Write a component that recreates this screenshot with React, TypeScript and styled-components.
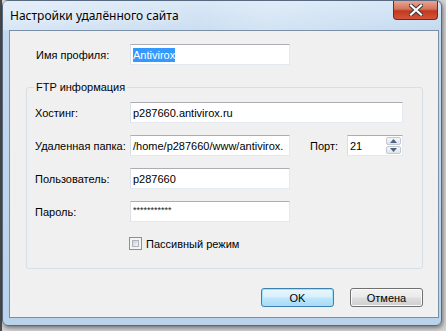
import styled, { createGlobalStyle } from "styled-components";

const GlobalStyle = createGlobalStyle`
  html, body {
    margin: 0;
    padding: 0;
  }
  body {
    width: 446px;
    height: 331px;
    overflow: hidden;
    background: #d2d2d2;
  }
`;

const Desktop = styled.div`
  width: 446px;
  height: 331px;
  box-sizing: border-box;
  padding-left: 2px;
  background: linear-gradient(to right, #4a4a4a 0 2px, #d2d2d2 2px);
`;

const Window = styled.div`
  width: 440px;
  height: 326px;
  box-sizing: border-box;
  display: flex;
  flex-direction: column;
  border: 1px solid #56697f;
  border-radius: 6px;
  background: linear-gradient(
    to bottom,
    #d6e6f6 0%,
    #c3d9ef 10%,
    #b9d3ec 100%
  );
  box-shadow: 1px 2px 4px rgba(0, 0, 0, 0.45);
`;

const TitleBar = styled.div`
  height: 29px;
  display: flex;
  align-items: flex-start;
  padding-left: 7px;
  background: linear-gradient(
    100deg,
    rgba(255, 255, 255, 0.35) 0%,
    rgba(255, 255, 255, 0.1) 45%,
    rgba(255, 255, 255, 0.25) 60%,
    rgba(255, 255, 255, 0) 100%
  );
`;

const Title = styled.span`
  margin-top: 6px;
  font-family: "Noto Sans", "Open Sans", sans-serif;
  font-size: 12px;
  color: #000;
  text-shadow: 0 0 6px rgba(255, 255, 255, 0.9);
`;

const CloseButton = styled.div`
  margin-left: auto;
  margin-right: 3px;
  width: 45px;
  height: 19px;
  box-sizing: border-box;
  display: flex;
  align-items: center;
  justify-content: center;
  border: 1px solid #6e2a22;
  border-top: none;
  border-radius: 0 0 4px 4px;
  background: linear-gradient(
    to bottom,
    #e8a493 0%,
    #d6735d 45%,
    #c0391d 55%,
    #d4553a 100%
  );
`;

const Client = styled.div`
  flex: 1;
  margin: 0 2px 7px 6px;
  border: 1px solid #7a8ea6;
  background: #f0f0f0;
  display: flex;
  flex-direction: column;
  font-family: "Liberation Sans", Arial, sans-serif;
  font-size: 11px;
  color: #000;
`;

const ProfileRow = styled.div`
  display: flex;
  align-items: center;
  margin-top: 13px;
  padding-left: 26px;
`;

const Label = styled.span<{ $width?: number }>`
  width: ${({ $width }) => ($width ? `${$width}px` : "auto")};
  flex-shrink: 0;
  white-space: nowrap;
`;

const TextBox = styled.div<{ $width: number }>`
  width: ${({ $width }) => $width}px;
  height: 21px;
  box-sizing: border-box;
  display: flex;
  align-items: center;
  padding: 0 2px;
  background: #fff;
  border: 1px solid #e3e9ef;
  border-top-color: #abadb3;
  border-left-color: #dbdfe6;
  white-space: nowrap;
  overflow: hidden;
`;

const Selected = styled.span`
  background: #3399ff;
  color: #fff;
  padding: 1px 0;
`;

const Masked = styled.span`
  font-size: 9px;
  letter-spacing: 0;
  align-self: flex-start;
  margin-top: 3px;
  color: #222;
`;

const Group = styled.fieldset`
  margin: 16px 15px 0 16px;
  padding: 9px 17px 18px 8px;
  border: 1px solid #d5dfe5;
  border-radius: 3px;
  display: flex;
  flex-direction: column;
  gap: 12px;
`;

const Legend = styled.legend`
  padding: 0 2px;
  margin-left: -1px;
`;

const FieldRow = styled.div`
  display: flex;
  align-items: center;
`;

const PortLabel = styled.span`
  margin-left: 20px;
  width: 37px;
`;

const Spin = styled.div`
  width: 56px;
  height: 21px;
  box-sizing: border-box;
  display: flex;
  align-items: center;
  padding: 0 1px 0 2px;
  background: #fff;
  border: 1px solid #e3e9ef;
  border-top-color: #abadb3;
  border-left-color: #dbdfe6;
`;

const SpinValue = styled.span`
  flex: 1;
`;

const SpinArrows = styled.div`
  display: flex;
  flex-direction: column;
  gap: 1px;
`;

const SpinArrow = styled.div`
  width: 15px;
  height: 8px;
  box-sizing: border-box;
  display: flex;
  align-items: center;
  justify-content: center;
  border: 1px solid #c3c9d1;
  border-radius: 2px;
  background: linear-gradient(to bottom, #f6f7f9, #e1e4e9);
`;

const CheckRow = styled.div`
  display: flex;
  align-items: center;
  gap: 4px;
  margin-top: 3px;
  padding-left: 94px;
`;

const CheckBox = styled.div`
  width: 13px;
  height: 13px;
  box-sizing: border-box;
  border: 1px solid #8e8f8f;
  padding: 2px;
  background: #f4f4f4;
`;

const CheckInner = styled.div`
  width: 100%;
  height: 100%;
  background: linear-gradient(135deg, #cbcfd5, #f6f6f6);
  border: 1px solid #aeb3b9;
  box-sizing: border-box;
`;

const ButtonRow = styled.div`
  display: flex;
  justify-content: flex-end;
  gap: 16px;
  margin-top: 19px;
  padding-right: 15px;
`;

const Button = styled.div<{ $primary?: boolean }>`
  width: 73px;
  height: 19px;
  box-sizing: border-box;
  display: flex;
  align-items: center;
  justify-content: center;
  border-radius: 3px;
  border: 1px solid ${({ $primary }) => ($primary ? "#3c7fb1" : "#707070")};
  background: ${({ $primary }) =>
    $primary
      ? "linear-gradient(to bottom, #eaf6fd 0%, #d9f0fc 45%, #bee6fd 55%, #a7d9f5 100%)"
      : "linear-gradient(to bottom, #f2f2f2 0%, #ebebeb 45%, #dddddd 55%, #cfcfcf 100%)"};
  box-shadow: inset 0 0 0 1px
    ${({ $primary }) => ($primary ? "#9fe2fb" : "#fbfbfb")};
`;

const App = () => {
  return (
    <>
      <GlobalStyle />
      <Desktop>
        <Window>
          <TitleBar>
            <Title>Настройки удалённого сайта</Title>
            <CloseButton>
              <svg width="14" height="12" viewBox="0 0 14 12">
                <path
                  d="M2 1.5 L12 10.5 M12 1.5 L2 10.5"
                  stroke="#3b3b3b"
                  strokeWidth="4.2"
                  strokeLinecap="square"
                />
                <path
                  d="M2 1.5 L12 10.5 M12 1.5 L2 10.5"
                  stroke="#fff"
                  strokeWidth="2.2"
                  strokeLinecap="square"
                />
              </svg>
            </CloseButton>
          </TitleBar>
          <Client>
            <ProfileRow>
              <Label $width={94}>Имя профиля:</Label>
              <TextBox $width={160}>
                <Selected>Antivirox</Selected>
              </TextBox>
            </ProfileRow>
            <Group>
              <Legend>FTP информация</Legend>
              <FieldRow>
                <Label $width={95}>Хостинг:</Label>
                <TextBox $width={273}>p287660.antivirox.ru</TextBox>
              </FieldRow>
              <FieldRow>
                <Label $width={95}>Удаленная папка:</Label>
                <TextBox $width={160}>/home/p287660/www/antivirox.</TextBox>
                <PortLabel>Порт:</PortLabel>
                <Spin>
                  <SpinValue>21</SpinValue>
                  <SpinArrows>
                    <SpinArrow>
                      <svg width="7" height="4" viewBox="0 0 7 4">
                        <path d="M0 4 L3.5 0 L7 4 Z" fill="#4d6185" />
                      </svg>
                    </SpinArrow>
                    <SpinArrow>
                      <svg width="7" height="4" viewBox="0 0 7 4">
                        <path d="M0 0 L3.5 4 L7 0 Z" fill="#4d6185" />
                      </svg>
                    </SpinArrow>
                  </SpinArrows>
                </Spin>
              </FieldRow>
              <FieldRow>
                <Label $width={95}>Пользователь:</Label>
                <TextBox $width={160}>p287660</TextBox>
              </FieldRow>
              <FieldRow>
                <Label $width={95}>Пароль:</Label>
                <TextBox $width={160}>
                  <Masked>***********</Masked>
                </TextBox>
              </FieldRow>
              <CheckRow>
                <CheckBox>
                  <CheckInner />
                </CheckBox>
                <Label>Пассивный режим</Label>
              </CheckRow>
            </Group>
            <ButtonRow>
              <Button $primary>OK</Button>
              <Button>Отмена</Button>
            </ButtonRow>
          </Client>
        </Window>
      </Desktop>
    </>
  );
};

export default App;
